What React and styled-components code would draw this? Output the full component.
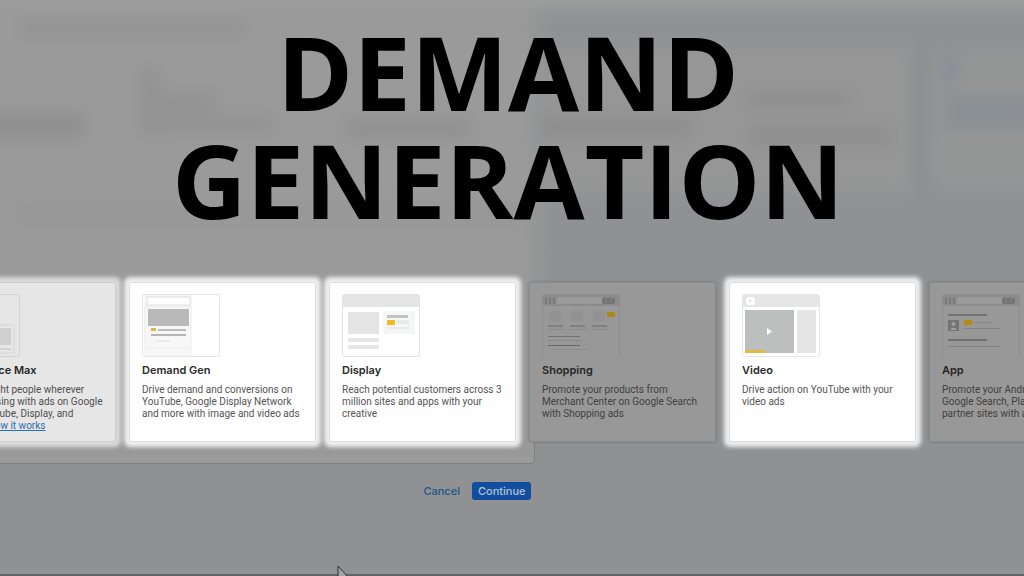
import React from "react";
import styled, { createGlobalStyle } from "styled-components";

const App = () => {
  return (
    <Page>
      <GlobalStyle />
      <Stage>
        <Hero>
          <Backdrop />
          <Heading>
            <span>Demand</span>
            <span>Generation</span>
          </Heading>
        </Hero>
        <CardRow>
          {campaigns.map(({ title, text, link, tone, Art }) => {
            return (
              <Card key={title} $tone={tone}>
                <Thumb viewBox="0 0 78 63" aria-hidden="true">
                  <Art />
                </Thumb>
                <h2>{title}</h2>
                <p>
                  {text}
                  {link && <a href="#how">{link}</a>}
                </p>
              </Card>
            );
          })}
        </CardRow>
      </Stage>
      <PanelFoot />
      <Actions>
        <CancelButton type="button">Cancel</CancelButton>
        <ContinueButton type="button">Continue</ContinueButton>
      </Actions>
      <BottomEdge />
      <Cursor viewBox="0 0 12 18" aria-hidden="true">
        <path
          d="M1 1v15l3.4-3 2.2 5 2.4-1-2.2-4.800h4.400z"
          fill="#a3a3a3"
          stroke="#2f2f2f"
        />
      </Cursor>
    </Page>
  );
};

export default App;

// The out-of-focus goal picker behind the heading
const Backdrop = () => (
  <BackdropSvg viewBox="0 0 1024 270" preserveAspectRatio="none" aria-hidden="true">
    <defs>
      <filter
        id="soft"
        filterUnits="userSpaceOnUse"
        x="-40"
        y="-40"
        width="1104"
        height="350"
      >
        <feGaussianBlur stdDeviation="7" />
      </filter>
    </defs>
    <g filter="url(#soft)">
      <rect x="545" y="44" width="366" height="140" fill="#969696" />
      <rect x="932" y="50" width="110" height="130" fill="#949595" />
      <rect x="915" y="44" width="10" height="140" fill="#8b8e91" />
      <rect x="20" y="16" width="226" height="20" fill="#949494" />
      <rect x="-20" y="108" width="104" height="24" fill="#8f8f8f" />
      <rect x="140" y="66" width="20" height="64" fill="#939393" />
      <rect x="140" y="88" width="76" height="18" fill="#939393" />
      <rect x="142" y="110" width="132" height="18" fill="#939393" />
      <rect x="346" y="114" width="124" height="18" fill="#909090" />
      <rect x="542" y="112" width="148" height="18" fill="#8d8d8d" />
      <rect x="746" y="86" width="104" height="18" fill="#8f8f8f" />
      <rect x="750" y="120" width="142" height="20" fill="#8f8f8f" />
      <rect x="942" y="56" width="16" height="22" fill="#888c98" />
      <rect x="944" y="90" width="90" height="34" fill="#8b9094" />
      <rect x="16" y="200" width="516" height="12" fill="#969696" />
      <rect x="-30" y="-30" width="1084" height="38" fill="#9d9d9d" />
    </g>
  </BackdropSvg>
);

const PerformanceArt = () => (
  <>
    <rect x="0.5" y="0.5" width="77" height="62" rx="2" fill="none" stroke="#d2d2d2" />
    <rect x="40" y="31" width="32" height="28" fill="none" stroke="#d6d6d6" />
    <rect x="42" y="34" width="27" height="17" fill="#cfcfcf" />
    <rect x="42" y="54" width="27" height="2" fill="#d2d2d2" />
  </>
);

const DemandArt = () => (
  <>
    <rect x="0.5" y="0.5" width="77" height="62" rx="2" fill="#fff" stroke="#e4e4e4" />
    <rect x="2" y="1" width="48" height="61" fill="#f7f7f7" />
    <rect x="5" y="3" width="43" height="8" fill="#fff" stroke="#dedede" />
    <rect x="6" y="15" width="41" height="17" fill="#b9b9b9" />
    <rect x="3" y="13" width="46" height="41" fill="none" stroke="#eeeeee" />
    <rect x="9" y="34" width="5" height="3" fill="#e8b04c" />
    <rect x="16" y="35" width="28" height="2" fill="#bcbcbc" />
    <rect x="9" y="40" width="35" height="2" fill="#b5b5b5" />
    <rect x="13" y="46" width="15" height="2" fill="#ebebeb" />
  </>
);

const DisplayArt = () => (
  <>
    <rect x="0.5" y="0.5" width="77" height="62" rx="2" fill="#fff" stroke="#e2e2e2" />
    <rect x="1" y="1" width="76" height="12" fill="#e5e5e5" />
    <rect x="6" y="18" width="31" height="22" fill="#e4e4e4" />
    <rect x="6" y="44" width="31" height="4" fill="#e6e6e6" />
    <rect x="6" y="51" width="31" height="4" fill="#e6e6e6" />
    <rect x="41" y="17" width="32" height="23" fill="#f5f7f7" />
    <rect x="45" y="21" width="21" height="3" fill="#c2c2c2" />
    <rect x="45" y="26" width="8" height="5" fill="#f4b824" />
    <rect x="54" y="26" width="13" height="4" fill="#e8eaea" />
    <rect x="45" y="33" width="22" height="2" fill="#e8eaea" />
  </>
);

const SearchBarArt = () => (
  <>
    <path d="M.5 62V2.500q0-2 2-2h73q2 0 2 2V62" fill="none" stroke="#8d8d8d" />
    <rect x="1" y="1" width="76" height="11" fill="#8b8b8b" />
    <rect x="15" y="3" width="45" height="7" fill="#9a9a9a" />
    <path d="M4 4v6M8 4v6M12 4v6" stroke="#7a7a7a" strokeWidth="2" />
    <rect x="60" y="4" width="13" height="6" rx="2" fill="#747474" />
    <path d="M64 5v4M69 5v4" stroke="#858585" />
  </>
);

const ShoppingArt = () => (
  <>
    <SearchBarArt />
    {[7, 29, 51].map(x => (
      <g key={x}>
        <rect x={x} y="17" width="12" height="11" rx="3" fill="#929292" />
        <rect x={x - 1} y="31" width="15" height="2" fill="#7f7f7f" />
        <rect x={x - 1} y="35" width="17" height="1" fill="#8a8a8a" />
      </g>
    ))}
    <rect x="65" y="18" width="8" height="5" fill="#ae8a12" />
    <rect x="6" y="42" width="32" height="1" fill="#717171" />
    <rect x="6" y="46" width="34" height="1" fill="#898989" />
    <rect x="6" y="51" width="32" height="1" fill="#686868" />
    <rect x="10" y="55" width="36" height="1" fill="#8b8b8b" />
  </>
);

const VideoArt = () => (
  <>
    <rect x="0.5" y="0.5" width="77" height="62" rx="2" fill="#fff" stroke="#e6e6e6" />
    <rect x="1" y="1" width="76" height="12" fill="#e6e6e6" />
    <rect x="4" y="3" width="9" height="8" rx="3" fill="#fff" />
    <path d="M7 5l3 2-3 2z" fill="#e6e6e6" />
    <rect x="3" y="16" width="49" height="43" fill="#bdbebe" />
    <rect x="55" y="16" width="19" height="43" fill="#e5e5e5" />
    <path d="M25 34v7l5-3.500z" fill="#fff" />
    <rect x="3" y="56" width="20" height="3" fill="#e3bb3c" />
  </>
);

const AppArt = () => (
  <>
    <SearchBarArt />
    <rect x="6" y="20" width="39" height="2" fill="#747474" />
    <rect x="6" y="26" width="11" height="11" fill="#747474" />
    <circle cx="11.500" cy="30" r="2" fill="#a0a0a0" />
    <path d="M8 36q3.500-5 7 0z" fill="#a0a0a0" />
    <rect x="22" y="26" width="8" height="5" fill="#b68b14" />
    <rect x="32" y="28" width="20" height="1" fill="#898989" />
    <rect x="22" y="34" width="36" height="1" fill="#828282" />
    <rect x="6" y="45" width="39" height="2" fill="#707070" />
    <rect x="6" y="52" width="52" height="1" fill="#828282" />
  </>
);

const campaigns = [
  {
    title: "Performance Max",
    text:
      "Reach the right people wherever they’re browsing with ads on Google Search, YouTube, Display, and\nmore. ",
    link: "See how it works",
    tone: "half",
    Art: PerformanceArt
  },
  {
    title: "Demand Gen",
    text:
      "Drive demand and conversions on YouTube, Google Display Network and more with image and video ads",
    tone: "lit",
    Art: DemandArt
  },
  {
    title: "Display",
    text:
      "Reach potential customers across 3 million sites and apps with your creative",
    tone: "lit",
    Art: DisplayArt
  },
  {
    title: "Shopping",
    text:
      "Promote your products from Merchant Center on Google Search with Shopping ads",
    tone: "dim",
    Art: ShoppingArt
  },
  {
    title: "Video",
    text: "Drive action on YouTube with your video ads",
    tone: "lit",
    Art: VideoArt
  },
  {
    title: "App",
    text:
      "Promote your Android or iOS app on Google Search, Play, YouTube and partner sites with app ads",
    tone: "dim",
    Art: AppArt
  }
];

const tones = {
  lit: {
    background: "#fefefe",
    border: "#dcdcdc",
    title: "#2a2a2a",
    text: "#555555",
    shadow: "0 0 4px 5px rgba(255, 255, 255, 0.85)"
  },
  half: {
    background: "#e6e6e6",
    border: "#cccccc",
    title: "#252525",
    text: "#505050",
    shadow: "0 0 4px 5px rgba(230, 230, 230, 0.85)"
  },
  dim: {
    background: "#989898",
    border: "#8a8a8a",
    title: "#262626",
    text: "#414141",
    shadow: "0 0 3px rgba(0, 0, 0, 0.2)"
  }
};

const GlobalStyle = createGlobalStyle`
  body {
    margin: 0;
    background: #8f9193;
  }
`;

const Page = styled.main`
  position: relative;
  display: flex;
  flex-direction: column;
  min-height: 100vh;
  overflow: hidden;
  background: #8f9193;
  font-family: Roboto, "Liberation Sans", sans-serif;
`;

const Stage = styled.section`
  background: linear-gradient(to right, #9a9a9a 51%, #8f9193 54%);
`;

const Hero = styled.header`
  position: relative;
  padding: 17px 0 49px;
`;

const BackdropSvg = styled.svg`
  position: absolute;
  inset: 0;
  width: 100%;
  height: 100%;
`;

const Heading = styled.h1`
  position: relative;
  margin: 0;
  padding-right: 8px;
  color: #000;
  font: bold 103px/108px "Open Sans", "Noto Sans", sans-serif;
  text-align: center;
  text-transform: uppercase;

  span {
    display: block;
  }
`;

const CardRow = styled.div`
  display: flex;
  gap: 13px;
  margin-left: -71px;
`;

const Card = styled.article`
  position: relative;
  z-index: ${({ $tone }) => ($tone === "dim" ? 0 : 1)};
  box-sizing: border-box;
  flex: 0 0 187px;
  min-height: 160px;
  padding: 11px 10px 7px 12px;
  border: 1px solid ${({ $tone }) => tones[$tone].border};
  border-radius: 2px;
  background: ${({ $tone }) => tones[$tone].background};
  box-shadow: ${({ $tone }) => tones[$tone].shadow};

  h2 {
    margin: 5px 0 6px;
    color: ${({ $tone }) => tones[$tone].title};
    font: 600 11px/16px Inter, Roboto, sans-serif;
  }

  p {
    margin: 0;
    color: ${({ $tone }) => tones[$tone].text};
    font-size: 10px;
    line-height: 12px;
    white-space: pre-line;
  }

  a {
    color: #2a6fae;
  }
`;

const Thumb = styled.svg`
  display: block;
  width: 78px;
  height: 63px;
`;

const PanelFoot = styled.div`
  box-sizing: border-box;
  width: 52%;
  min-width: 535px;
  height: 22px;
  border: solid #7f8080;
  border-width: 0 1px 1px 0;
  border-bottom-right-radius: 4px;
  background: #999999;
`;

const Actions = styled.div`
  box-sizing: border-box;
  display: flex;
  justify-content: flex-end;
  gap: 6px;
  width: 52%;
  margin: 18px 0 auto;
  padding-right: 1px;
`;

const Button = styled.button`
  padding: 0 6px;
  border: 0;
  border-radius: 3px;
  font: 500 11px/18px Inter, Roboto, sans-serif;
  cursor: pointer;
`;

const CancelButton = styled(Button)`
  background: none;
  color: #1c568c;
`;

const ContinueButton = styled(Button)`
  background: #124e9f;
  color: #b4c0cf;
`;

const BottomEdge = styled.div`
  height: 2px;
  background: #646464;
`;

const Cursor = styled.svg`
  position: absolute;
  top: 565px;
  left: 337px;
  width: 12px;
  height: 18px;
`;
